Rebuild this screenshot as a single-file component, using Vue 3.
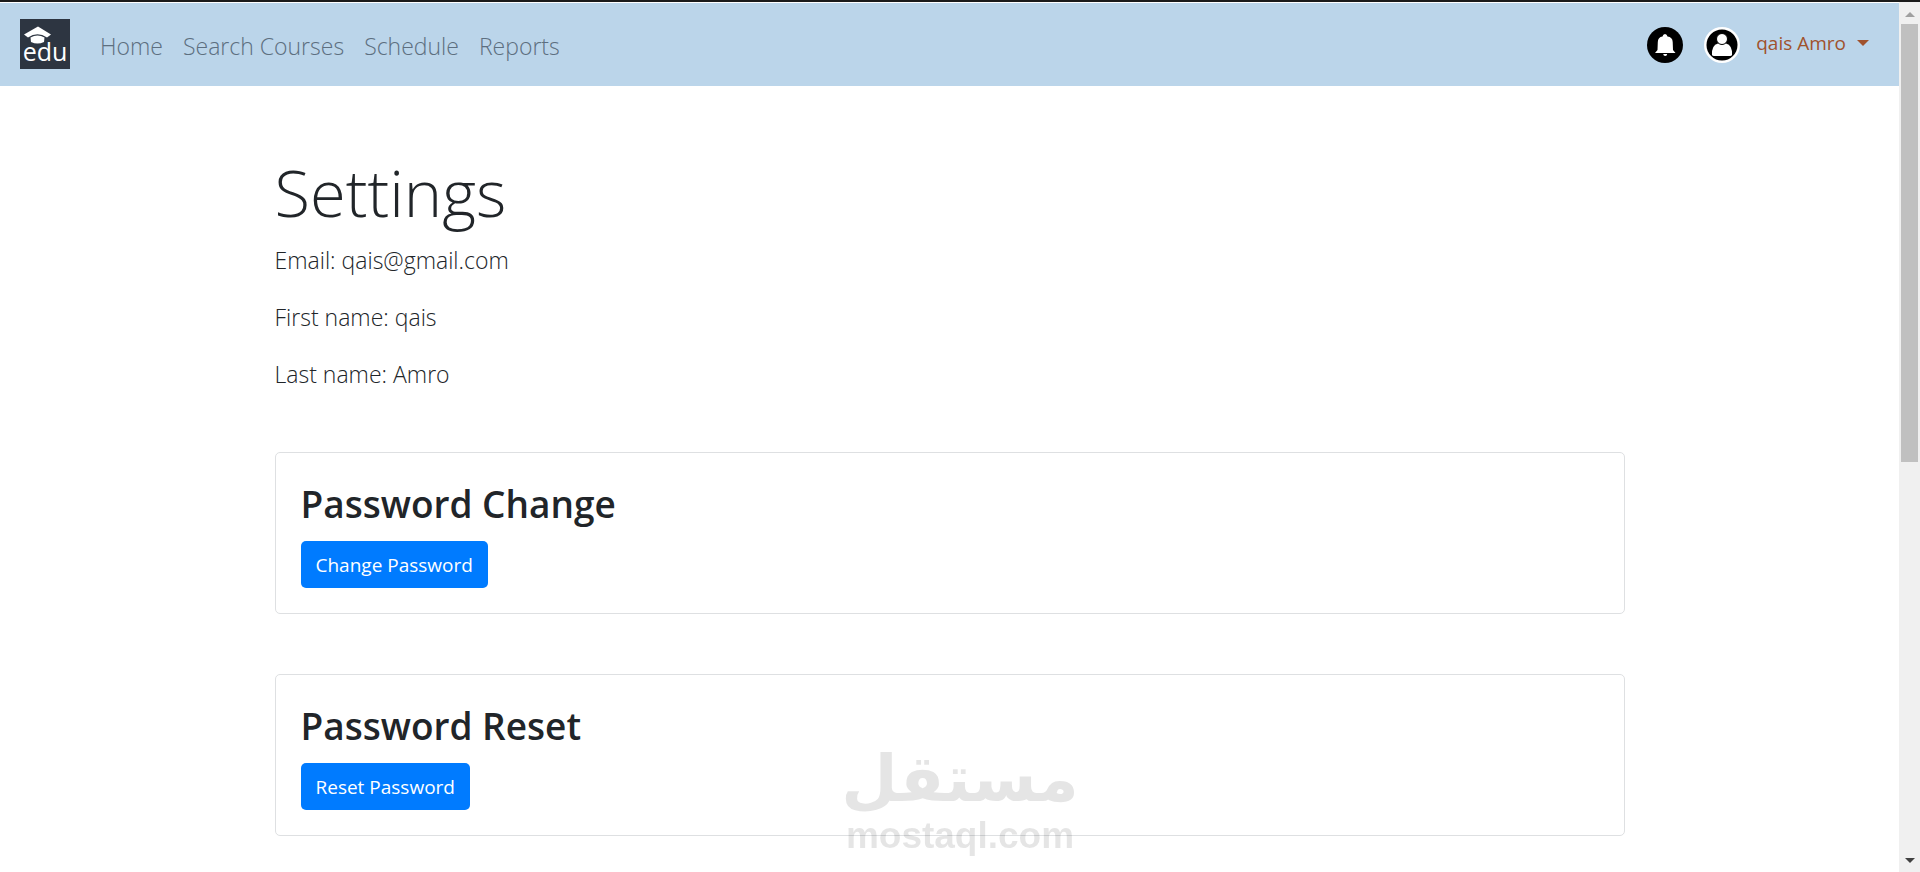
<template>
  <div class="window">
    <div class="page">
      <header class="navbar">
        <a class="brand" href="#">
          <svg class="brand-cap" viewBox="0 0 50 26" aria-hidden="true">
            <path d="M4 15.500 L18 7.500 L31 15.500 L27 18.500 Q17.500 12 8 18.500 Z" fill="#fff" />
            <path d="M10.500 18.500 Q17.500 14.500 24.500 18.500 L24 23 Q17.500 26 11 23 Z" fill="#fff" />
          </svg>
          <span class="brand-text">edu</span>
        </a>
        <nav class="nav-links">
          <a v-for="link in links" :key="link" href="#">{{ link }}</a>
        </nav>
        <div class="account">
          <button class="icon-btn" type="button" aria-label="Notifications">
            <svg viewBox="0 0 36 36">
              <circle cx="18" cy="18" r="18" fill="#000" />
              <path d="M15.500 9.500 Q16 7 18 7 Q20 7 20.500 9.500 Q25.500 10 25.700 15 L26 23 L28.500 26 H8 L10.500 23 L10.800 15 Q11 10 15.500 9.500 Z" fill="#fff" />
              <path d="M16.200 27 H20.200 Q20 29 18.200 29 Q16.500 29 16.200 27 Z" fill="#fff" />
            </svg>
          </button>
          <button class="icon-btn" type="button" aria-label="Profile">
            <svg viewBox="0 0 36 36">
              <circle cx="18" cy="18" r="18" fill="#fff" />
              <circle cx="18" cy="18" r="15.500" fill="#000" />
              <path d="M8 28 Q7.500 18 14 16.500 H22 Q28.500 18 28 28 Q27.500 29 26 29 H10 Q8.500 29 8 28 Z" fill="#fff" />
              <circle cx="18" cy="12" r="5.500" fill="#fff" stroke="#000" />
            </svg>
          </button>
          <button class="user-menu" type="button" aria-haspopup="true">
            {{ user.firstName }} {{ user.lastName }}
            <span class="caret"></span>
          </button>
        </div>
      </header>

      <main class="content">
        <h1>Settings</h1>
        <p>Email: {{ user.email }}</p>
        <p>First name: {{ user.firstName }}</p>
        <p>Last name: {{ user.lastName }}</p>

        <section v-for="card in cards" :key="card.title" class="card">
          <h2>{{ card.title }}</h2>
          <button class="btn-primary" type="button">{{ card.action }}</button>
        </section>
      </main>
    </div>

    <div class="scrollbar" aria-hidden="true">
      <span class="arrow arrow-up"></span>
      <div class="track"><div class="thumb"></div></div>
      <span class="arrow arrow-down"></span>
    </div>

    <div class="watermark">
      <span class="watermark-ar" lang="ar" dir="rtl">مستقل</span>
      <span class="watermark-en">mostaql.com</span>
    </div>
  </div>
</template>

<script setup>
import { reactive } from 'vue'

const links = ['Home', 'Search Courses', 'Schedule', 'Reports']

const user = reactive({
  firstName: 'qais',
  lastName: 'Amro',
  email: 'qais@gmail.com'
})

const cards = [
  { title: 'Password Change', action: 'Change Password' },
  { title: 'Password Reset', action: 'Reset Password' }
]
</script>

<style>
body {
  margin: 0;
  background: #fff;
}
</style>

<style scoped>
.window {
  display: flex;
  min-height: 100vh;
  box-sizing: border-box;
  border-top: 2px solid #1b1b1b;
  font-family: "Open Sans", "Noto Sans", sans-serif;
  color: #212529;
}

.page {
  flex: 1;
  min-width: 0;
  padding-top: 1px;
}

.navbar {
  display: flex;
  align-items: center;
  padding: 16px 30px 17px 20px;
  background: #bbd5ea;
}

.brand {
  position: relative;
  display: flex;
  align-items: flex-end;
  justify-content: center;
  width: 50px;
  height: 50px;
  background: #2d3541;
  color: #fff;
  text-decoration: none;
}

.brand-cap {
  position: absolute;
  top: 0;
  left: 0;
  width: 50px;
  height: 26px;
}

.brand-text {
  font-size: 25px;
  line-height: 35px;
}

.nav-links {
  display: flex;
  gap: 20px;
  margin-left: 30px;
  padding-top: 3px;
}

.nav-links a {
  font-size: 23px;
  font-weight: 300;
  line-height: 38px;
  color: #5d6f80;
  text-decoration: none;
}

.account {
  display: flex;
  align-items: center;
  margin-left: auto;
  padding-top: 1px;
}

.icon-btn {
  width: 36px;
  height: 36px;
  margin-right: 21px;
  padding: 0;
  border: none;
  background: none;
  cursor: pointer;
}

.icon-btn svg {
  display: block;
}

.icon-btn + .user-menu {
  margin-left: -5px;
}

.user-menu {
  display: flex;
  align-items: center;
  gap: 11px;
  padding: 0 0 3px;
  border: none;
  background: none;
  font-family: inherit;
  font-size: 19px;
  line-height: 30px;
  color: #a0522d;
  cursor: pointer;
}

.caret {
  border: 6px solid transparent;
  border-top-color: #a0522d;
  border-bottom: none;
}

.content {
  max-width: 1350px;
  margin: 0 auto;
  padding: 64px 24px 24px;
}

h1 {
  margin: 0 0 8px;
  font-size: 65px;
  font-weight: 300;
  line-height: 84px;
}

p {
  margin: 0 0 20px;
  font-size: 23px;
  font-weight: 300;
  line-height: 37px;
}

p + .card {
  margin-top: 59px;
}

.card {
  margin-top: 60px;
  padding: 25px;
  border: 1px solid #dee0e2;
  border-radius: 5px;
}

h2 {
  margin: 0 0 11px;
  font-size: 37px;
  font-weight: 600;
  line-height: 52px;
}

.btn-primary {
  padding: 9px 15px 8px;
  border: none;
  border-radius: 5px;
  background: #007bff;
  color: #fff;
  font-family: inherit;
  font-size: 19px;
  line-height: 30px;
  cursor: pointer;
}

.scrollbar {
  display: flex;
  flex-direction: column;
  align-items: center;
  gap: 7px;
  width: 21px;
  box-sizing: border-box;
  padding: 10px 0 9px;
  background: #f0f0f0;
}

.track {
  flex: 1;
  width: 17px;
}

.thumb {
  height: 53%;
  background: #c0c0c0;
}

.arrow {
  border: 5px solid transparent;
}

.arrow-up {
  border-top: none;
  border-bottom-color: #a0a0a0;
}

.arrow-down {
  border-bottom: none;
  border-top-color: #404040;
}

.watermark {
  position: fixed;
  right: 0;
  bottom: 15px;
  left: 0;
  display: flex;
  flex-direction: column;
  align-items: center;
  color: #000;
  font-weight: 700;
  opacity: 0.1;
  pointer-events: none;
}

.watermark-ar {
  font-family: "DejaVu Sans", sans-serif;
  font-size: 65px;
  line-height: 72px;
}

.watermark-en {
  font-family: "Liberation Sans", sans-serif;
  font-size: 37px;
  line-height: 42px;
}
</style>
